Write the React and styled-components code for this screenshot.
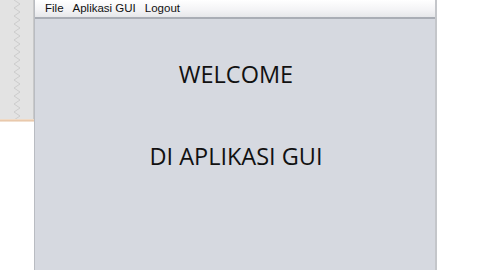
import styled, { createGlobalStyle } from 'styled-components'

const GlobalStyle = createGlobalStyle`
  html, body {
    margin: 0;
    padding: 0;
    background: #ffffff;
  }
  #root {
    width: 480px;
    height: 270px;
    overflow: hidden;
  }
`

const Screen = styled.div`
  display: flex;
  width: 480px;
  height: 270px;
  background: #ffffff;
`

const SideStrip = styled.div`
  width: 34px;
  display: flex;
  flex-direction: column;
`

const SidePanel = styled.div`
  height: 119px;
  background: #e3e3e3;
  border-right: 1px solid #c9c9c9;
  box-sizing: border-box;
  display: flex;
  justify-content: center;
`

const SideRule = styled.div`
  height: 3px;
  background: linear-gradient(#f3e2d2, #e9c9ac, #f6ece2);
`

const Window = styled.div`
  width: 400px;
  display: flex;
  flex-direction: column;
  border-left: 1px solid #b9bcc2;
  border-right: 2px solid #c4c6ca;
`

const MenuBar = styled.div`
  height: 17px;
  display: flex;
  align-items: center;
  gap: 9px;
  padding-left: 10px;
  background: linear-gradient(#ffffff 0%, #f4f4f6 55%, #e6e7ea 100%);
  border-bottom: 2px solid #a9adb5;
  font-family: "Liberation Sans", Arial, sans-serif;
  font-size: 11.5px;
  color: #111111;
`

const MenuItem = styled.span`
  line-height: 17px;
`

const Content = styled.div`
  flex: 1;
  background: #d6d9e0;
  display: flex;
  flex-direction: column;
  align-items: center;
  font-family: "Open Sans", "DejaVu Sans", sans-serif;
  font-size: 23.5px;
  color: #111111;
`

const Heading = styled.div`
  margin-top: ${p => p.$top}px;
  line-height: 30px;
  margin-left: 2px;
`

const Zigzag = () => (
  <svg width="14" height="119" viewBox="0 0 14 119">
    <polyline
      fill="none"
      stroke="#cdcdcd"
      strokeWidth="1"
      points={Array.from({ length: 31 }, (_, i) => `${i % 2 ? 10 : 4},${i * 4}`).join(' ')}
    />
  </svg>
)

export default function App() {
  return (
    <>
      <GlobalStyle />
      <Screen>
        <SideStrip>
          <SidePanel>
            <Zigzag />
          </SidePanel>
          <SideRule />
        </SideStrip>
        <Window>
          <MenuBar>
            <MenuItem>File</MenuItem>
            <MenuItem>Aplikasi GUI</MenuItem>
            <MenuItem>Logout</MenuItem>
          </MenuBar>
          <Content>
            <Heading $top={40}>WELCOME</Heading>
            <Heading $top={52}>DI APLIKASI GUI</Heading>
          </Content>
        </Window>
      </Screen>
    </>
  )
}
